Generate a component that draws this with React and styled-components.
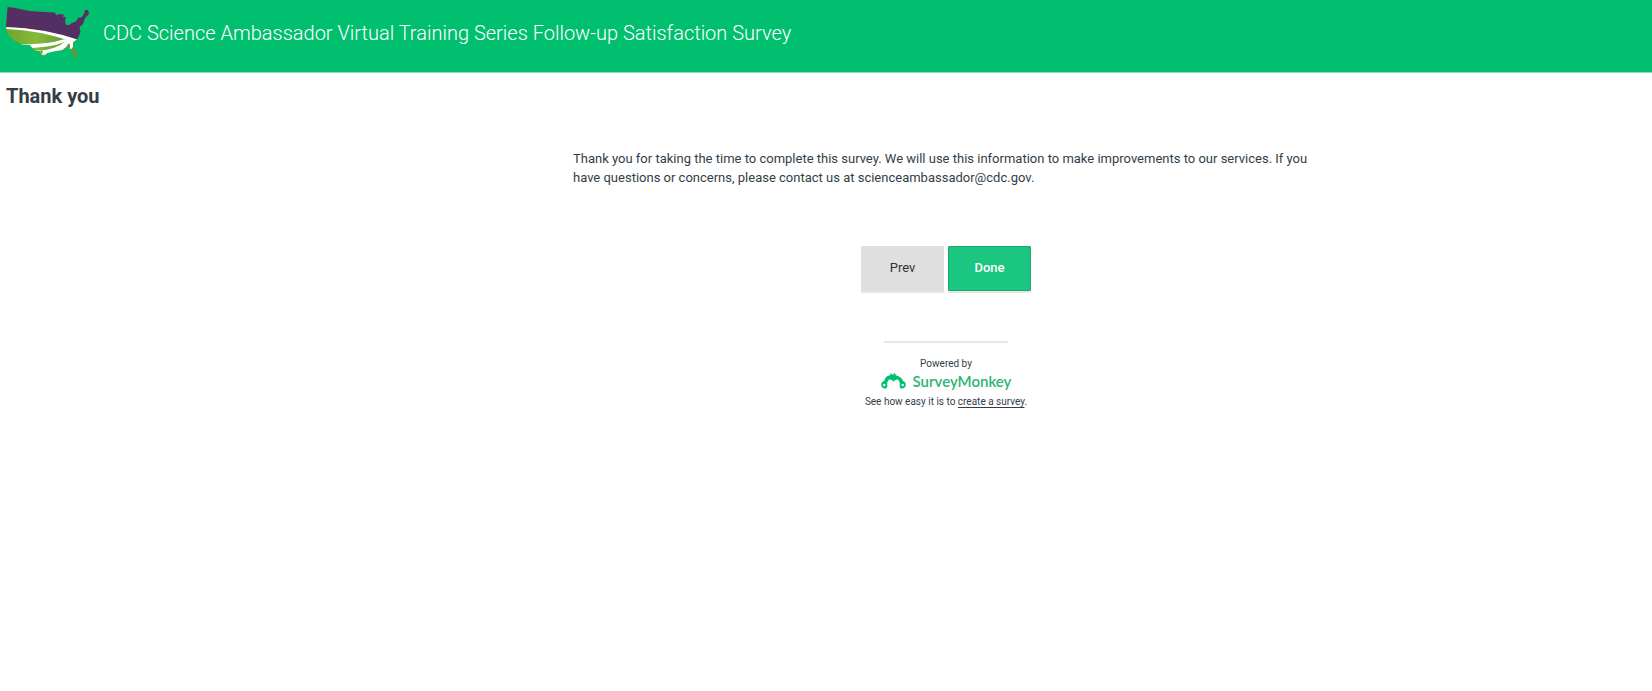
import React from "react";
import styled, { createGlobalStyle } from "styled-components";

const GlobalStyle = createGlobalStyle`
  * { box-sizing: border-box; }
  body {
    margin: 0;
    background: #fff;
    color: #333e48;
    font-family: Roboto, "Liberation Sans", sans-serif;
  }
`;

const Header = styled.header`
  display: flex;
  align-items: flex-start;
  gap: 13px;
  min-height: 73px;
  padding: 6px 6px 0;
  background: #00bf6f;
  border-bottom: 1px solid #80dfb7;
`;

const MapLogo = styled.svg`
  flex: none;
  width: 84px;
  height: 54px;
`;

const SurveyTitle = styled.h1`
  margin: 13px 0 0;
  color: #fff;
  font-size: 20px;
  font-weight: 300;
  line-height: 28px;
`;

const PageTitle = styled.h2`
  margin: 0;
  padding: 8px 6px;
  font-size: 20px;
  font-weight: 700;
  line-height: 30px;
`;

const Content = styled.main`
  margin-left: 240px;
  padding: 30px 16px;
`;

const Column = styled.div`
  display: flex;
  flex-direction: column;
  align-items: center;
  max-width: 746px;
  margin: 0 auto;
`;

const Message = styled.p`
  width: 100%;
  margin: 0;
  font-size: 13px;
  font-weight: 400;
  line-height: 19px;
`;

const Actions = styled.div`
  display: flex;
  gap: 4px;
  margin-top: 59px;
`;

const Button = styled.button`
  width: 83px;
  height: 45px;
  padding: 0 0 2px;
  border: 1px solid ${(p) => (p.$primary ? "#19ab6b" : "#dfdfdf")};
  border-radius: 1px;
  background: ${(p) => (p.$primary ? "#1bc780" : "#dfdfdf")};
  box-shadow: 0 2px 0 #e6e6e6;
  color: ${(p) => (p.$primary ? "#fff" : "#333")};
  font-family: inherit;
  font-size: 13px;
  font-weight: ${(p) => (p.$primary ? 500 : 400)};
  line-height: 16px;
  cursor: pointer;
`;

const Footer = styled.footer`
  display: flex;
  flex-direction: column;
  align-items: center;
  margin-top: 50px;
  font-size: 10px;
  line-height: 14px;
`;

const Divider = styled.hr`
  width: 124px;
  height: 2px;
  margin: 0 0 14px;
  border: 0;
  background: #e6e6e6;
`;

const Brand = styled.a`
  display: flex;
  align-items: center;
  gap: 7px;
  height: 24px;
  padding-bottom: 4px;
  color: #2bb573;
  font-family: Lato, sans-serif;
  font-size: 15px;
  font-weight: 600;
  text-decoration: none;
`;

const BrandMark = styled.svg`
  width: 25px;
  height: 18px;
`;

const CreateLink = styled.a`
  color: inherit;
  text-decoration: underline;
  text-underline-offset: 2px;
`;

export default function App() {
  return (
    <>
      <GlobalStyle />
      <Header>
        <MapLogo viewBox="0 0 84 54" role="img" aria-label="Map of the United States">
          <defs>
            <clipPath id="usa">
              <path d="M1.5 1 L7 1.5 L24 5 L40 6 L49 6.5 L50 9 L54 8 L58 8.5 L57 11 L60 11 L59 15 L60 19 L63 19 L66 17 L70 15.5 L72 12 L76 11 L78 8 L79 4 L82 4 L83 8 L79 12 L77 18 L73.5 21 L74.5 26 L72 32 L68 36 L67 41 L71 47 L71 52 L68 50 L65 43 L60 42 L58 44 L50 45 L41 47 L39 51 L35 48 L33 45 L28 44 L24 39 L16 38.5 L9 35 L4 31 L1 26 L0 20 Z" />
            </clipPath>
            <linearGradient id="field" x1="0" x2="1">
              <stop offset="0" stopColor="#70a52a" />
              <stop offset="0.35" stopColor="#86b83b" />
              <stop offset="0.7" stopColor="#62a137" />
              <stop offset="1" stopColor="#8b7a25" />
            </linearGradient>
          </defs>
          <g clipPath="url(#usa)">
            <path d="M0 0H84V54H0Z" fill="url(#field)" />
            <path d="M0 0H84V36H72Q38 22 0 21Z" fill="#532f64" />
            <path d="M0 21Q38 22 73 34L67 36Q33 24 0 23Z" fill="#fff" />
            <path d="M13 38Q40 39 57 33.5L63 33Q54 41 22 42Z" fill="#fff" />
            <path d="M25 45Q48 46 61 34L65 34Q56 47 35 49Q42 42 25 45Z" fill="#fff" />
            <path d="M46 47Q57 44 64 34L67 36L67 41L63 45Q65 39 63 37Q58 46 46 47Z" fill="#fff" />
          </g>
        </MapLogo>
        <SurveyTitle>CDC Science Ambassador Virtual Training Series Follow-up Satisfaction Survey</SurveyTitle>
      </Header>
      <PageTitle>Thank you</PageTitle>
      <Content>
        <Column>
          <Message>
            Thank you for taking the time to complete this survey. We will use this information to make
            improvements to our services. If you have questions or concerns, please contact us at
            scienceambassador@cdc.gov.
          </Message>
          <Actions>
            <Button type="button">Prev</Button>
            <Button type="submit" $primary>Done</Button>
          </Actions>
          <Footer>
            <Divider />
            <span>Powered by</span>
            <Brand href="#surveymonkey">
              <BrandMark viewBox="0 0 25 18" aria-hidden="true">
                <path d="M3 9Q5 3 10 3L8.5 1.5Q11 1 12 3L14 0L13.8 2.5L16 2L14.5 3.5Q20 4 22 9Q25 10 24.8 13Q24 17 20 16.5Q18 15 18.8 12Q18.5 7 15.5 7.5Q13 8 12.5 10Q12 8 9.5 7.5Q6.5 7 6.2 12Q7 15 5 16.5Q1 17 .2 13Q0 10 3 9Z" fill="#00bf6f" />
                <circle cx="3.3" cy="13" r="1.2" fill="#fff" />
                <circle cx="21.7" cy="13" r="1.2" fill="#fff" />
              </BrandMark>
              SurveyMonkey
            </Brand>
            <span>
              See how easy it is to <CreateLink href="#create">create a survey</CreateLink>.
            </span>
          </Footer>
        </Column>
      </Content>
    </>
  );
}
